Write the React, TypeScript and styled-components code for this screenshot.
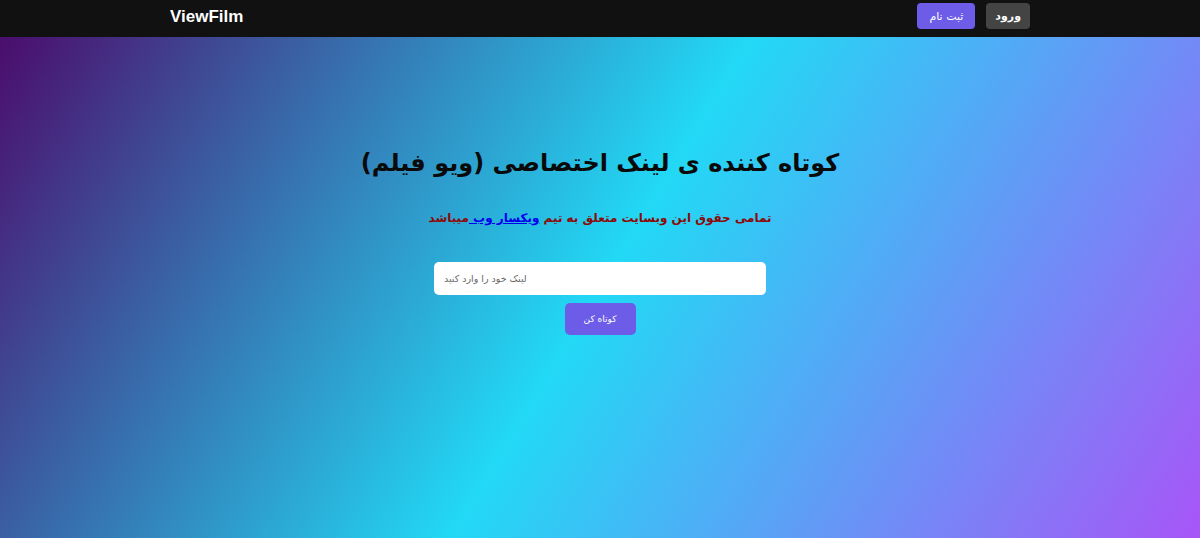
import React from "react";
import styled, { createGlobalStyle } from "styled-components";

const Global = createGlobalStyle`
  html, body { margin: 0; padding: 0; }
  body {
    font-family: "DejaVu Sans", "Liberation Sans", sans-serif;
    background: #111;
  }
  * { box-sizing: border-box; }
`;

const Page = styled.div`
  min-height: 538px;
  display: flex;
  flex-direction: column;
`;

const NavBar = styled.header`
  height: 37px;
  background: #111111;
  display: flex;
  justify-content: center;
`;

const NavInner = styled.div`
  width: 860px;
  padding-top: 3px;
  display: flex;
  align-items: flex-start;
  justify-content: space-between;
`;

const Logo = styled.a`
  color: #fff;
  font-family: "Liberation Sans", Arial, sans-serif;
  font-weight: 700;
  font-size: 17px;
  line-height: 27px;
  text-decoration: none;
`;

const NavActions = styled.nav`
  display: flex;
  gap: 11px;
  align-items: center;
`;

const NavButton = styled.button<{ $primary?: boolean }>`
  height: 26px;
  padding: 0 ${(p) => (p.$primary ? "12px" : "9px")};
  border: none;
  border-radius: 4px;
  background: ${(p) => (p.$primary ? "#6c5ce7" : "#444444")};
  color: #fff;
  font-family: "DejaVu Sans", sans-serif;
  font-size: 11px;
  font-weight: ${(p) => (p.$primary ? 400 : 700)};
  cursor: pointer;
`;

const Hero = styled.main`
  flex: 1;
  height: 501px;
  background: linear-gradient(121deg, #4b0d6c 0%, #22d9f5 50%, #a855f7 100%);
  display: flex;
  flex-direction: column;
  align-items: center;
  padding-top: 108px;
  direction: rtl;
`;

const Title = styled.h1`
  margin: 0;
  font-size: 24px;
  font-weight: 700;
  color: #0a0a0a;
  line-height: 36px;
`;

const Credit = styled.p`
  margin: 27px 0 0;
  font-size: 12px;
  font-weight: 700;
  color: #8b0a0a;
  line-height: 20px;
`;

const CreditLink = styled.a`
  color: #0000ee;
  text-decoration: underline;
`;

const Form = styled.form`
  margin-top: 34px;
  display: flex;
  flex-direction: column;
  align-items: center;
  gap: 8px;
`;

const UrlInput = styled.input`
  width: 332px;
  height: 33px;
  border: none;
  border-radius: 5px;
  background: #fff;
  padding: 0 10px;
  font-family: "DejaVu Sans", sans-serif;
  font-size: 9.5px;
  direction: ltr;
  &::placeholder { color: #666; }
`;

const ShortenButton = styled.button`
  width: 71px;
  height: 32px;
  border: none;
  border-radius: 5px;
  background: #6c5ce7;
  color: #fff;
  font-family: "DejaVu Sans", sans-serif;
  font-size: 9px;
  cursor: pointer;
`;

export default function App() {
  return (
    <Page>
      <Global />
      <NavBar>
        <NavInner>
          <Logo href="#">ViewFilm</Logo>
          <NavActions>
            <NavButton $primary>ثبت نام</NavButton>
            <NavButton>ورود</NavButton>
          </NavActions>
        </NavInner>
      </NavBar>
      <Hero>
        <Title>کوتاه کننده ی لینک اختصاصی (ویو فیلم)</Title>
        <Credit>
          تمامی حقوق این وبسایت متعلق به تیم <CreditLink href="#">ویکسار وب </CreditLink>میباشد
        </Credit>
        <Form onSubmit={(e) => e.preventDefault()}>
          <UrlInput placeholder="لینک خود را وارد کنید" />
          <ShortenButton type="submit">کوتاه کن</ShortenButton>
        </Form>
      </Hero>
    </Page>
  );
}
